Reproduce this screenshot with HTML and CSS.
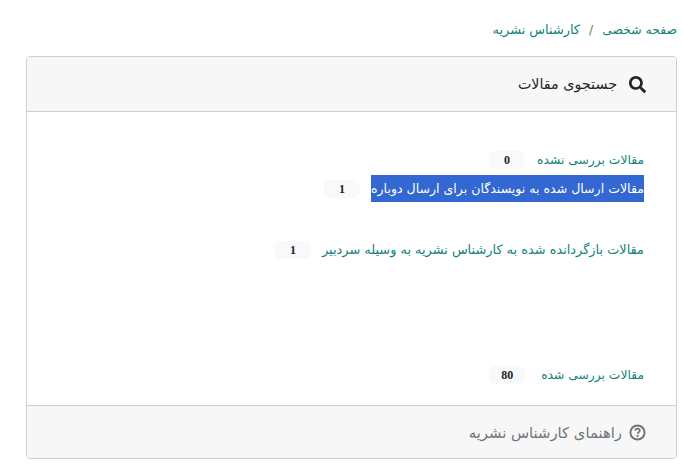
FILE: index.html
```html
<!DOCTYPE html>
<html lang="fa" dir="rtl">
<head>
<meta charset="utf-8">
<title>کارشناس نشریه</title>
<link rel="stylesheet" href="styles.css">
</head>
<body>
<nav class="crumbs">
  <a href="#">صفحه شخصی</a>
  <span class="sep">/</span>
  <a href="#" class="crumb-current">کارشناس نشریه</a>
</nav>
<section class="card">
  <header class="card-head">
    <svg class="icon-search" viewBox="0 0 512 512" aria-hidden="true"><path d="M505 442.700L405.300 343c-4.500-4.500-10.600-7-17-7H372c27.600-35.300 44-79.700 44-128C416 93.100 322.900 0 208 0S0 93.100 0 208s93.100 208 208 208c48.300 0 92.700-16.400 128-44v16.300c0 6.400 2.500 12.500 7 17l99.700 99.700c9.400 9.400 24.600 9.400 33.900 0l28.300-28.300c9.400-9.400 9.400-24.600.1-34zM208 336c-70.700 0-128-57.200-128-128 0-70.700 57.200-128 128-128 70.700 0 128 57.200 128 128 0 70.700-57.200 128-128 128z"/></svg>
    <h2 class="card-title">جستجوی مقالات</h2>
  </header>
  <div class="card-body">
    <div class="row row-first"><a href="#" class="link">مقالات بررسی نشده</a><span class="badge">0</span></div>
    <div class="row row-selected"><a href="#" class="link selected">مقالات ارسال شده به نویسندگان برای ارسال دوباره</a><span class="badge">1</span></div>
    <div class="row row-returned"><a href="#" class="link link-returned">مقالات بازگردانده شده به کارشناس نشریه به وسیله سردبیر</a><span class="badge">1</span></div>
    <div class="row row-reviewed"><a href="#" class="link">مقالات بررسی شده</a><span class="badge">80</span></div>
  </div>
  <footer class="card-foot">
    <svg class="icon-help" viewBox="0 0 24 24" aria-hidden="true"><circle cx="12" cy="12" r="10" fill="none" stroke="currentColor" stroke-width="2.800"/><path d="M8.800 9.500c.2-1.900 1.600-2.900 3.300-2.900 1.800 0 3.200 1.100 3.200 2.700 0 2.300-3.200 2.500-3.200 4.600" fill="none" stroke="currentColor" stroke-width="2.400"/><circle cx="12.100" cy="17" r="1.600" fill="currentColor"/></svg>
    <a href="#" class="help-link">راهنمای کارشناس نشریه</a>
  </footer>
</section>
</body>
</html>
```
FILE: styles.css
```css
* { box-sizing: border-box; }
html, body { margin: 0; padding: 0; }
body {
  background: #fff;
  font-family: "DejaVu Sans", "Noto Sans", sans-serif;
  font-size: 12px;
  color: #212529;
  padding: 0 6px 0 26px;
}
a { color: #128277; text-decoration: none; }
.crumbs {
  height: 56px;
  padding: 22px 0 0 0;
  display: flex;
  gap: 9px;
  line-height: 16px;
  font-size: 12.400px;
}
.crumb-current { font-size: 12.900px; }
.sep { color: #6c757d; }
.card {
  border: 1px solid #cfcfcf;
  border-radius: 4px;
  height: 403px;
  display: flex;
  flex-direction: column;
  overflow: hidden;
}
.card-head {
  height: 55px;
  flex: none;
  background: #f7f7f7;
  border-bottom: 1px solid #cfcfcf;
  display: flex;
  align-items: center;
  gap: 12px;
  padding: 0 30px;
}
.icon-search { width: 17px; height: 17px; fill: #212529; }
.card-title { margin: 0; font-size: 14.300px; font-weight: 400; color: #212529; }
.card-body { flex: 1; padding: 0 32px; }
.row { display: flex; align-items: center; line-height: 18px; }
.row-first { padding-top: 39px; gap: 12px; }
.row-selected { padding-top: 6px; gap: 11px; }
.row-returned { padding-top: 39px; gap: 11px; }
.row-reviewed { padding-top: 107px; gap: 16px; }
.link { font-size: 12.300px; }
.link-returned { font-size: 12.900px; }
.selected { font-size: 12.550px; background: #3367d1; color: #fff; line-height: 27px; display: block; white-space: nowrap; }
.badge {
  display: block;
  width: 36px;
  height: 18px;
  border-radius: 6px;
  background: #f8f9fb;
  font-family: "Liberation Serif", serif;
  font-size: 12px;
  font-weight: 700;
  line-height: 18px;
  text-align: center;
  color: #212529;
}
.card-foot {
  height: 53px;
  flex: none;
  background: #f7f7f7;
  border-top: 1px solid #cfcfcf;
  display: flex;
  align-items: center;
  gap: 7px;
  padding: 0 30px;
  color: #6c757d;
}
.icon-help { width: 17px; height: 17px; color: #6c757d; }
.help-link { color: #6c757d; font-size: 14.800px; }
```
